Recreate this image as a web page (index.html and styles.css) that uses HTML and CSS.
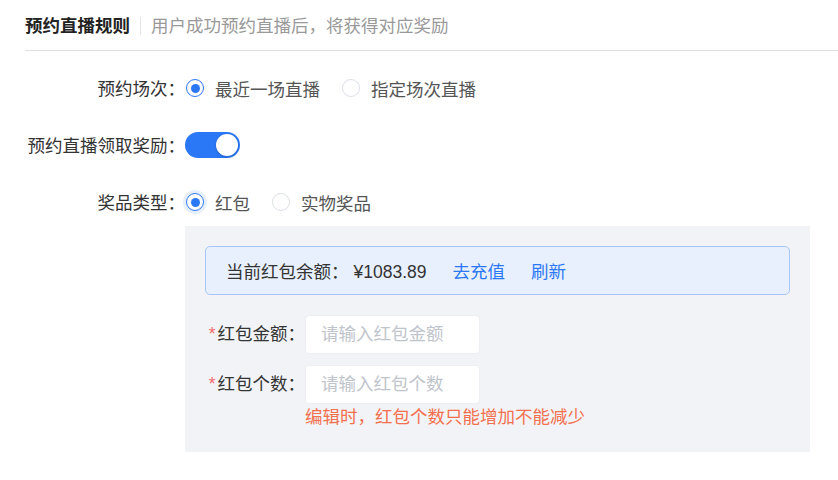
FILE: index.html
```html
<!DOCTYPE html>
<html lang="zh-CN">
<head>
<meta charset="utf-8">
<link rel="stylesheet" href="styles.css">
</head>
<body>
<div class="header">
  <span class="title">预约直播规则</span>
  <span class="sep"></span>
  <span class="subtitle">用户成功预约直播后，将获得对应奖励</span>
</div>
<div class="form">
  <div class="item">
    <div class="label">预约场次：</div>
    <div class="content">
      <div class="radios">
        <label class="radio"><span class="dot checked"></span><span class="rtext">最近一场直播</span></label>
        <label class="radio"><span class="dot"></span><span class="rtext">指定场次直播</span></label>
      </div>
    </div>
  </div>
  <div class="item">
    <div class="label">预约直播领取奖励：</div>
    <div class="content">
      <div class="radios"><span class="switch"><span class="knob"></span></span></div>
    </div>
  </div>
  <div class="item">
    <div class="label">奖品类型：</div>
    <div class="content">
      <div class="radios">
        <label class="radio"><span class="dot checked focus"></span><span class="rtext">红包</span></label>
        <label class="radio"><span class="dot"></span><span class="rtext">实物奖品</span></label>
      </div>
      <div class="panel">
        <div class="info">
          <span class="balance">当前红包余额：<span class="amount">¥1083.89</span></span>
          <a class="link">去充值</a>
          <a class="link">刷新</a>
        </div>
        <div class="field">
          <div class="flabel"><span class="star">*</span>红包金额：</div>
          <input class="input" placeholder="请输入红包金额">
        </div>
        <div class="field second">
          <div class="flabel"><span class="star">*</span>红包个数：</div>
          <div class="fcol">
            <input class="input" placeholder="请输入红包个数">
            <div class="error">编辑时，红包个数只能增加不能减少</div>
          </div>
        </div>
      </div>
    </div>
  </div>
</div>
</body>
</html>
```
FILE: styles.css
```css
* { box-sizing: border-box; }
html, body { margin: 0; padding: 0; background: #fff; }
body {
  font-family: "Liberation Sans", "Noto Sans CJK SC", sans-serif;
  font-size: 17.5px;
  color: #333;
  width: 838px;
  height: 480px;
  overflow: hidden;
}
.header {
  margin-left: 25px;
  padding: 14px 0 12px;
  border-bottom: 1px solid #dcdfe6;
  display: flex;
  align-items: center;
  line-height: 24px;
}
.title { font-weight: bold; color: #222; }
.sep { width: 1px; height: 18px; background: #e4e4e4; margin: 0 10px 0 10px; }
.subtitle { color: #999; }
.form {
  padding-top: 18px;
  display: flex;
  flex-direction: column;
  gap: 17px;
}
.item { display: flex; align-items: flex-start; }
.label {
  width: 185px;
  text-align: right;
  line-height: 40px;
  height: 40px;
  color: #333;
  white-space: nowrap;
}
.content { display: flex; flex-direction: column; }
.radios { height: 40px; display: flex; align-items: center; margin-top: -1px; }
.radio { display: flex; align-items: center; margin-left: 1px; margin-right: 21px; color: #555; }
.dot {
  width: 18px; height: 18px; border-radius: 50%;
  border: 1px solid #dcdfe6; background: #fff;
  display: inline-flex; align-items: center; justify-content: center;
}
.dot.checked { border-color: #2b78f6; }
.dot.checked::after {
  content: ""; width: 9px; height: 9px; border-radius: 50%; background: #2b78f6;
}
.dot.focus { box-shadow: 0 0 0 3px #e6effd; }
.rtext { margin-left: 11px; }
.switch {
  width: 55px; height: 26px; border-radius: 13px; background: #2b78f6;
  display: flex; align-items: center; justify-content: flex-end; padding-right: 2px;
}
.knob {
  width: 22px; height: 22px; border-radius: 50%; background: #fff;
  box-shadow: 0 1px 3px rgba(0,0,0,0.2);
}
.panel {
  margin-top: 4px;
  width: 625px;
  background: #f2f3f7;
  padding: 20px 20px 24px;
}
.info {
  height: 49px;
  background: #e8f0fe;
  border: 1px solid #a7c6f8;
  border-radius: 5px;
  display: flex;
  align-items: center;
  padding-left: 20px;
  margin-bottom: 20px;
  color: #333;
}
.amount { margin-left: 5px; }
.link { color: #2b78f6; margin-left: 26px; }
.field { display: flex; align-items: flex-start; }
.field.second { margin-top: 11px; }
.flabel {
  width: 100px; text-align: right; line-height: 39px; color: #333; white-space: nowrap;
}
.star { color: #f56c6c; margin-right: 2px; }
.input {
  width: 175px; height: 39px;
  border: 1px solid #eceef2; border-radius: 4px; background: #fff;
  padding: 0 15px;
  font: inherit; color: #333; outline: none;
}
.input::placeholder { color: #c0c4cc; }
.error { color: #f3704e; line-height: 22px; margin-top: 2px; white-space: nowrap; }
```
